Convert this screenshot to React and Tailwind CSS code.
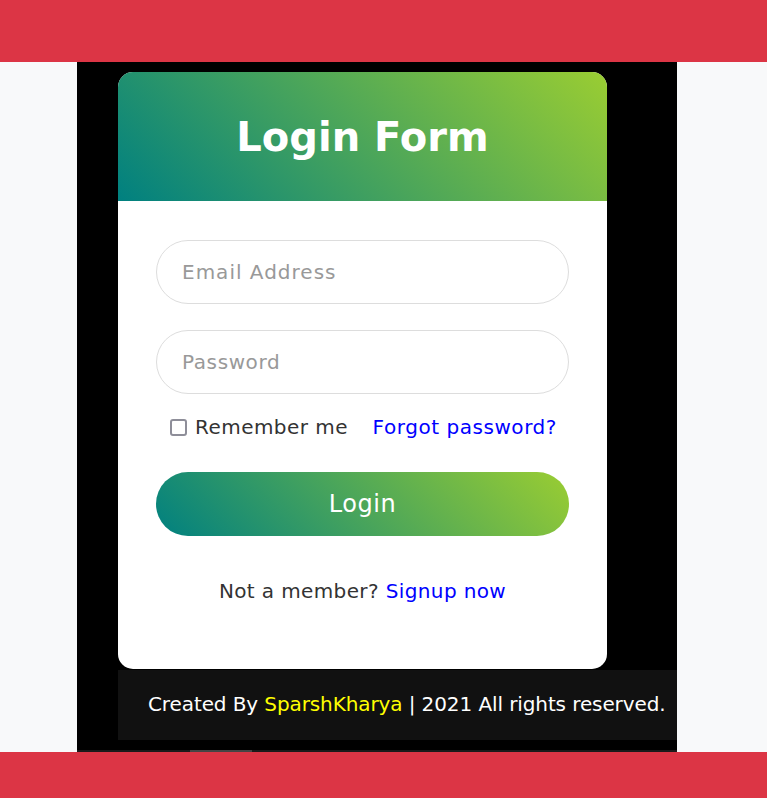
export default function App() {
  return (
    <div
      className="w-[767px] h-[798px] overflow-hidden bg-[#f8f9fa] flex flex-col"
      style={{ fontFamily: "'DejaVu Sans', 'Open Sans', sans-serif" }}
    >
      {/* top bar */}
      <div className="h-[62px] bg-[#dc3545] shrink-0"></div>

      {/* dark page area */}
      <div className="ml-[77px] w-[600px] h-[690px] bg-black pt-[10px] flex flex-col shrink-0">
        {/* card */}
        <div className="ml-[41px] w-[489px] h-[597px] bg-white rounded-[15px] overflow-hidden flex flex-col">
          <div className="h-[129px] bg-linear-[45deg] from-[#008080] to-[#9acd32] flex items-center justify-center">
            <h1 className="text-white text-[40px] font-bold leading-none">Login Form</h1>
          </div>

          <div className="px-[38px] pt-[39px] flex flex-col">
            <input
              type="text"
              placeholder="Email Address"
              className="h-[64px] w-full rounded-full border border-[#dddddd] px-[25px] text-[20px] tracking-[1px] text-[#333] placeholder:text-[#999] outline-none"
            />
            <input
              type="password"
              placeholder="Password"
              className="mt-[26px] h-[64px] w-full rounded-full border border-[#dddddd] px-[25px] text-[20px] tracking-[0.6px] text-[#333] placeholder:text-[#999] outline-none"
            />

            <div className="mt-[20px] h-[26px] flex items-center justify-between pl-[14px] pr-[12px]">
              <label className="flex items-center gap-[8px] text-[20px] leading-none tracking-[0.45px] text-[#333]">
                <span className="w-[17px] h-[17px] border-2 border-[#8e8e99] rounded-[3px] bg-white"></span>
                Remember me
              </label>
              <a className="text-[20px] leading-none tracking-[0.55px] text-[#0000ff]">Forgot password?</a>
            </div>

            <button className="mt-[32px] h-[64px] w-full rounded-full bg-linear-[45deg] from-[#008080] to-[#9acd32] text-white text-[24px] tracking-[0.6px]">
              Login
            </button>

            <p className="mt-[42px] text-center text-[20px] leading-[26px] tracking-[0.38px] text-[#333]">
              Not a member? <a className="text-[#0000ff]">Signup now</a>
            </p>
          </div>
        </div>

        {/* footer */}
        <div className="ml-[41px] mt-[1px] h-[70px] bg-[#111111] flex items-center pl-[30px]">
          <p className="-mt-[3px] text-white text-[20px] leading-[26px] tracking-[-0.1px] whitespace-nowrap">
            Created By <span className="text-[#ffff00]">SparshKharya</span> | 2021 All rights reserved.
          </p>
        </div>

        <div className="mt-auto h-[2px] bg-[#1a1a1a] flex">
          <div className="ml-[113px] w-[62px] bg-[#444]"></div>
        </div>
      </div>

      {/* bottom bar */}
      <div className="flex-1 bg-[#dc3545]"></div>
    </div>
  );
}
